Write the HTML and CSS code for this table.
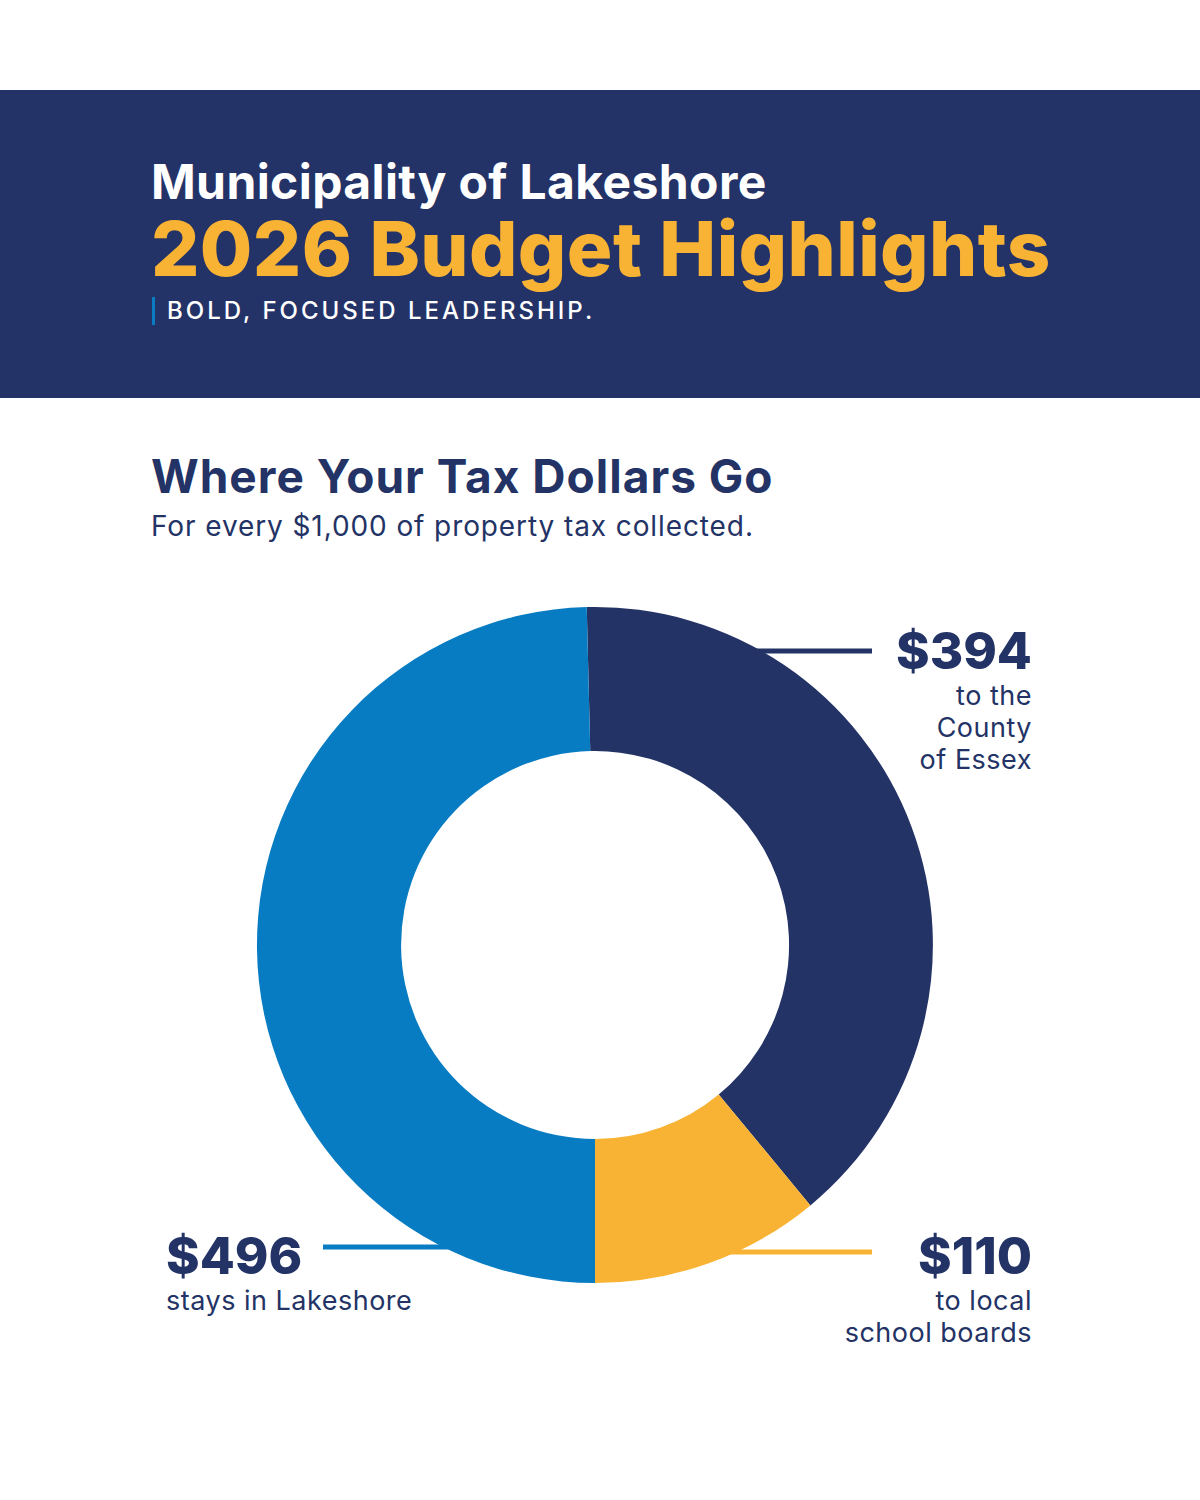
FILE: index.html
```html
<!DOCTYPE html>
<html lang="en">
<head>
<meta charset="utf-8">
<title>Municipality of Lakeshore – 2026 Budget Highlights</title>
<link rel="stylesheet" href="styles.css">
</head>
<body>
<div class="page">
  <header class="banner">
    <div class="banner-org">Municipality of Lakeshore</div>
    <h1 class="banner-title">2026 Budget Highlights</h1>
    <div class="banner-tag">BOLD, FOCUSED LEADERSHIP.</div>
  </header>

  <section class="intro">
    <h2 class="intro-title">Where Your Tax Dollars Go</h2>
    <p class="intro-sub">For every $1,000 of property tax collected.</p>
  </section>

  <div class="chart">
    <svg class="donut" width="1200" height="800" viewBox="0 580 1200 800" aria-hidden="true">
      <line class="lead lead-navy" x1="720" y1="651" x2="872" y2="651"/>
      <line class="lead lead-blue" x1="323" y1="1247" x2="480" y2="1247"/>
      <line class="lead lead-yellow" x1="700" y1="1252" x2="872" y2="1252"/>
      <path class="seg-navy" d="M 586.74 607.1 A 338 338 0 0 1 810.4 1205.4 L 718.7 1094.5 A 194 194 0 0 0 590.26 751.06 Z"/>
      <path class="seg-yellow" d="M 810.4 1205.4 A 338 338 0 0 1 595 1283 L 595 1139 A 194 194 0 0 0 718.7 1094.5 Z"/>
      <path class="seg-blue" d="M 595 1283 A 338 338 0 0 1 586.74 607.1 L 590.26 751.06 A 194 194 0 0 0 595 1139 Z"/>
    </svg>

    <div class="label label-county">
      <div class="label-amount">$394</div>
      <div class="label-text">to the<br>County<br>of Essex</div>
    </div>
    <div class="label label-local">
      <div class="label-amount">$496</div>
      <div class="label-text">stays in Lakeshore</div>
    </div>
    <div class="label label-school">
      <div class="label-amount">$110</div>
      <div class="label-text">to local<br>school boards</div>
    </div>
  </div>
</div>
</body>
</html>
```

FILE: styles.css
```css
* { box-sizing: border-box; }

html, body {
  margin: 0;
  padding: 0;
  background: #ffffff;
}

body {
  font-family: Inter, "Open Sans", "Liberation Sans", sans-serif;
  color: #233366;
}

.page {
  width: 1200px;
  padding-top: 90px;
}

/* ---------- Banner ---------- */
.banner {
  background: #243367;
  height: 308px;
  padding: 63px 0 0 151px;
}

.banner-org {
  color: #ffffff;
  font-weight: 700;
  font-size: 48px;
  line-height: 57px;
  letter-spacing: 0.4px;
}

.banner-title {
  margin: 0;
  color: #f9b334;
  font-weight: 800;
  font-size: 76px;
  line-height: 76px;
  letter-spacing: 0.4px;
}

.banner-tag {
  margin-top: 11px;
  margin-left: 1px;
  padding-left: 12px;
  border-left: 3px solid #0a7dc2;
  color: #ffffff;
  font-weight: 500;
  font-size: 24px;
  line-height: 28px;
  letter-spacing: 3px;
}

/* ---------- Intro ---------- */
.intro {
  padding: 52px 0 0 151px;
}

.intro-title {
  margin: 0;
  font-weight: 700;
  font-size: 46px;
  line-height: 52px;
  letter-spacing: 1px;
  color: #233366;
}

.intro-sub {
  margin: 6px 0 0;
  font-weight: 400;
  font-size: 28px;
  line-height: 36px;
  letter-spacing: 0.9px;
  color: #233366;
}

/* ---------- Chart ---------- */
.chart {
  position: relative;
  width: 1200px;
  height: 800px;
  margin-top: 36px;
}

.donut {
  display: block;
}

.lead {
  stroke-width: 5;
}
.lead-navy { stroke: #233366; }
.lead-blue { stroke: #087cc2; }
.lead-yellow { stroke: #f9b334; }

.seg-navy { fill: #233366; }
.seg-blue { fill: #087cc2; }
.seg-yellow { fill: #f9b334; }

.label {
  position: absolute;
  color: #233366;
}

.label-amount {
  font-weight: 800;
  font-size: 51px;
  line-height: 58px;
}

.label-text {
  font-weight: 400;
  font-size: 27px;
  line-height: 32px;
  letter-spacing: 0.5px;
}

.label-county {
  right: 168px;
  top: 42px;
  text-align: right;
}

.label-local {
  left: 166px;
  top: 647px;
  text-align: left;
}

.label-school {
  right: 168px;
  top: 647px;
  text-align: right;
}
```
